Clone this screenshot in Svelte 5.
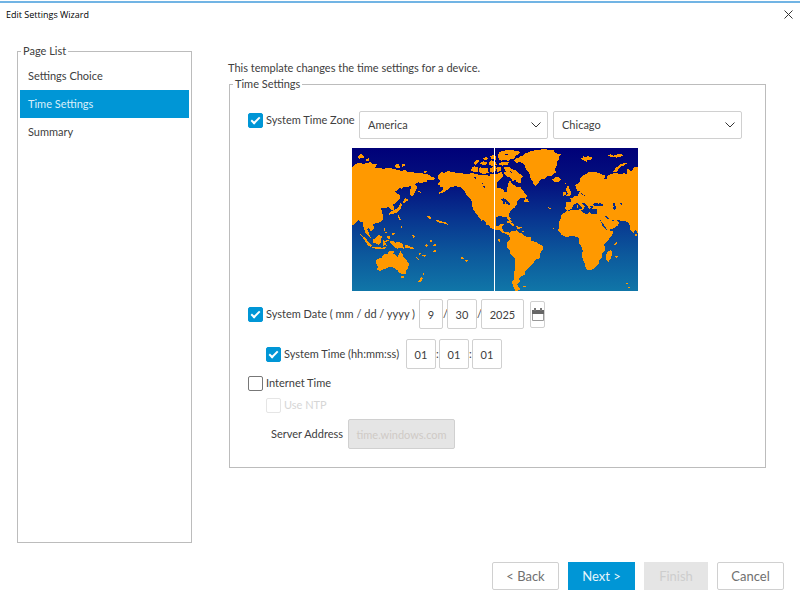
<script>
  const pages = ['Settings Choice', 'Time Settings', 'Summary'];
  const regions = ['America', 'Asia', 'Europe', 'Pacific'];
  const cities = ['Chicago', 'Denver', 'Los Angeles', 'New York'];

  let page = $state('Time Settings');

  // Time zone
  let useZone = $state(true);
  let region = $state('America');
  let city = $state('Chicago');

  // Date and time
  let useDate = $state(true);
  let useTime = $state(true);
  let date = $state({ month: '9', day: '30', year: '2025' });
  let time = $state({ hours: '01', minutes: '01', seconds: '01' });

  // Internet time
  let internetTime = $state(false);
  let useNtp = $state(false);
  let server = $state('time.windows.com');

  function step(dir) {
    const next = pages.indexOf(page) + dir;
    if (pages[next]) page = pages[next];
  }
</script>

<div class="wizard">
  <header>
    <h1>Edit Settings Wizard</h1>
    <button class="close" aria-label="Close">
      <svg width="9" height="9" viewBox="0 0 9 9"><path d="M.5.5l8 8M8.5.5l-8 8" /></svg>
    </button>
  </header>

  <div class="body">
    <fieldset class="pages">
      <legend>Page List</legend>
      {#each pages as p}
        <button class="page" class:active={page === p} onclick={() => (page = p)}>{p}</button>
      {/each}
    </fieldset>

    <main>
      <p class="intro">This template changes the time settings for a device.</p>

      <fieldset class="settings">
        <legend>Time Settings</legend>

        <div class="row zone">
          <label class="check zone-label"><input type="checkbox" bind:checked={useZone} />System Time Zone</label>
          <div class="select">
            <select aria-label="Region" bind:value={region}>
              {#each regions as r}<option>{r}</option>{/each}
            </select>
            <svg width="10" height="6" viewBox="0 0 10 6"><path d="M.5.5L5 5 9.5.5" /></svg>
          </div>
          <div class="select">
            <select aria-label="City" bind:value={city}>
              {#each cities as c}<option>{c}</option>{/each}
            </select>
            <svg width="10" height="6" viewBox="0 0 10 6"><path d="M.5.5L5 5 9.5.5" /></svg>
          </div>
        </div>

        <svg class="map" viewBox="0 0 858 429" role="img" aria-label="World map">
          <defs>
            <linearGradient id="sea" gradientUnits="userSpaceOnUse" x1="0" y1="0" x2="0" y2="429">
              <stop offset="0" stop-color="#000078" />
              <stop offset="0.25" stop-color="#04127f" />
              <stop offset="0.5" stop-color="#083690" />
              <stop offset="0.75" stop-color="#0c599c" />
              <stop offset="1" stop-color="#1076a8" />
            </linearGradient>
          </defs>
          <rect width="858" height="429" fill="url(#sea)" />

          <!-- north west: Asia, Alaska, western Canada -->
          <g class="land" transform="translate(-6 -9)">
            <path d="M6 68L15 58 30 52 38 56 50 55 62 50 66 56 80 58 75 68 95 68 98 73 115 68 135 73 155 78 165 75 172 80 185 80 195 84 210 85 225 86 240 90 243 95 252 97 257 102 245 106 232 105 230 111 222 112 212 115 205 112 195 118 200 124 200 130 195 143 187 155 180 150 180 135 185 122 175 125 160 125 155 131 150 128 142 137 135 140 141 145 150 150 150 160 140 172 130 178 132 195 125 197 118 190 118 184 110 188 92 190 97 200 98 215 98 226H6z" />
            <path d="M23 36L28 29 35 28 42 35 40 41 34 38 28 41zM48 43L56 40 58 47 49 49zM134 62L140 56 146 57 150 68 138 68zM155 58L165 57 163 64 156 65zM220 80L228 76 232 80 225 84z" />
            <path d="M158 172L166 159 178 165 168 168 163 176zM150 172L156 178 152 190 143 202 130 206 118 209 118 203 127 197 140 192 148 182zM142 205L146 210 153 225 147 225zM203 138L207 138 213 143 207 142zM232 214L240 214 245 220 238 222z" />
            <path d="M265 90L270 84 275 82 284 83 295 78 310 82 330 84 350 88 365 84 380 88 400 90 420 92 438 88 438 226H395L380 208 368 190 366 172 360 160 350 150 345 140 335 128 320 124 305 125 295 132 285 140 265 148 268 142 280 135 278 127 272 126 270 122 262 118 270 108 262 100z" />
            <path d="M363 78L366 66 375 64 384 68 384 80 372 80zM386 76L390 67 400 69 414 68 416 84 403 87 392 85zM370 53L380 45 390 44 384 52 376 60zM388 54L400 49 412 53 408 61 396 59zM398 41L410 36 414 43 403 45zM416 53L425 46 438 50 436 60 428 57 419 63zM420 70L438 64 438 76 426 84zM423 34L434 30 438 40 426 42z" />
            <path class="water" d="M372 97L380 95 377 101zM394 114L398 114 400 119 396 117zM400 124L404 124 404 128 400 127z" />
          </g>

          <!-- north east: eastern Canada, Greenland, Europe -->
          <g class="land" transform="translate(414 -9)">
            <path d="M14 88L20 88 35 80 40 92 28 105 20 115 22 128 38 132 45 142 52 140 50 128 55 122 52 113 64 112 68 118 80 125 92 125 96 135 100 138 105 146 112 150 108 158 95 158 85 165 80 170 80 180 72 190 66 192 62 198 55 210 62 220 60 226 55 226 48 215 40 216 30 212 18 218 14 226H0V88z" />
            <path d="M24 30L30 20 50 15 80 17 92 22 86 28 78 32 70 42 62 43 55 48 45 44 35 47 26 43zM0 35L10 29 20 35 18 44 6 43zM0 50L14 49 20 59 10 65 0 60zM28 54L38 50 56 52 53 59 38 62 26 60zM40 66L60 66 64 72 75 75 85 85 90 87 98 95 92 103 95 115 80 112 76 105 66 108 63 98 55 97 45 90 42 83 48 80zM18 68L32 65 34 75 23 82zM2 69L12 71 10 82 0 82zM105 159L111 162 115 165 116 171 102 170zM55 108L62 107 62 112 57 112z" />
            <path class="water" d="M32 162L42 160 50 166 57 174 61 176 60 180 50 178 46 170 44 178 40 178 39 168zM40 25L56 28 48 31zM60 76L66 83 60 82z" />
            <path d="M72 46L78 40 85 38 92 33 100 32 106 25 115 22 125 18 140 15 165 12 172 14 190 14 195 24 212 28 206 38 207 42 200 50 202 60 195 72 198 82 192 86 185 92 170 95 164 101 155 102 148 108 145 115 138 123 130 116 127 107 122 100 118 85 108 75 105 60 97 53 90 52 80 53z" />
            <path d="M185 100L188 103 195 97 208 97 214 104 205 110 192 110zM268 38L278 38 280 33 288 38 294 33 308 38 303 44 293 44 290 50 280 46zM352 30L362 28 370 32 378 30 390 25 400 31 392 36 384 35 380 38 360 35zM369 80L378 68 392 58 408 52 411 56 398 63 390 66 382 78 376 82z" />
            <path d="M258 130L256 120 268 112 272 98 285 88 300 80 318 82 330 86 345 92 345 100 335 102 350 102 352 92 360 88 375 84 395 88 402 82 408 88 412 88 410 70 418 72 420 80 430 74 430 68 444 66V226H210L214 212 220 205 232 198 226 190 228 172 244 170 240 158 248 158 255 152 265 154 266 142 272 140 275 150 285 152 292 140 290 125 300 108 312 102 308 112 305 122 322 120 335 122 318 128 316 134 300 142 290 152 280 150 268 136 262 138z" />
            <path d="M231 123L238 124 236 130 240 134 245 147 240 153 228 153 233 148 232 140 227 137zM219 142L227 140 229 148 219 153zM225 113L230 116 227 119zM174 186L184 190 183 194 177 192z" />
            <path class="water" d="M233 197L245 192 250 180 261 173 268 178 272 183 281 191 284 185 275 175 283 174 294 186 297 192 303 190 299 181 309 184 307 191 321 193 321 206 307 208 299 202 290 207 277 202 272 193 260 194 248 196zM309 180L315 172 325 176 333 173 334 178 344 179 335 184 316 184zM366 176L375 174 374 181 379 185 375 195 368 192 371 184zM390 176L396 173 395 179zM345 213L351 213 362 225 356 225z" />
            <path d="M260 181L264 180 265 190 260 190zM271 192L279 190 277 196z" />
          </g>

          <!-- south west: south east Asia, Oceania, Mexico -->
          <g class="land" transform="translate(-6 207)">
            <path d="M6 8H98L96 12 85 18 72 20 69 24 72 32 68 40 62 44 60 38 55 34 51 37 56 47 62 62 55 58 46 46 41 31 38 16 30 13 25 8 18 18 6 26z" />
            <path d="M31 52L38 58 45 61 55 75 66 86 62 91 52 83 42 68zM65 89L85 90 95 92 108 90 106 95 85 96 68 93zM68 68L78 63 86 53 96 59 93 66 94 76 86 84 76 79 69 78zM98 70L106 71 118 67 116 71 106 76 110 86 104 84 100 88zM100 32L105 34 104 42 111 47 106 47zM108 60L118 55 121 62 116 68zM119 71L130 71 135 78 142 74 158 80 162 95 148 92 142 96 132 88 122 80zM165 82L180 88 187 91 195 97 186 97 178 93 166 93z" />
            <path d="M79 130L84 126 95 122 98 116 105 110 112 111 118 102 132 101 130 110 143 119 148 111 150 98 155 109 158 112 161 122 170 129 177 142 174 155 169 160 167 170 160 171 148 168 143 160 138 158 135 154 125 150 115 151 107 156 95 158 90 162 82 158 83 148 79 140z" />
            <path d="M153 176L165 179 159 185 154 182zM218 167L223 171 218 176zM215 180L219 184 212 196 203 194z" />
            <path d="M127 48L134 48 132 56 126 54zM153 27L158 30 155 34zM186 52L194 57 193 63 188 60zM238 66L246 71 243 77zM252 80L258 83 255 89 249 86zM227 81L234 84 231 90 226 87zM251 99L260 101 258 106 250 104zM217 113L228 115 224 119 216 117zM206 107L213 110 208 113zM199 121L209 127 204 129zM333 120L342 122 340 127 334 125zM344 128L352 128 356 133 348 134zM233 1L242 2 239 6zM256 9L264 9 270 13 280 14 288 17 296 24 284 20 270 18 260 14z" />
            <path d="M390 5L393 8 396 13 402 19 412 25 408 18 400 7 398 4H438V36L425 32 412 23 404 21 395 13z" />
          </g>

          <!-- south east: the Americas, Africa, India -->
          <g class="land" transform="translate(414 207)">
            <path d="M0 5H14L12 15 18 27 28 26 34 20 42 21 36 30 39 43 46 45 54 44 60 48 55 54 43 49 34 46 28 39 12 38 0 32z" />
            <path d="M50 1L55 1 63 12 68 12 62 16zM48 15L56 12 70 20 76 25 68 26 59 19zM78 28L90 29 98 33 83 36zM95 40L102 44 98 46zM24 67L30 66 29 75 25 73zM189 32L193 32 193 36 189 36z" />
            <path d="M57 50L62 44 68 42 80 40 86 46 95 48 105 58 122 60 122 72 135 74 150 82 160 87 158 98 152 105 150 120 146 126 138 127 133 134 128 142 120 149 115 155 105 165 106 173 95 178 88 184 89 195 82 202 85 210 92 216 84 221H76L70 210 66 195 72 186 72 175 75 150 76 125 62 112 60 102 51 91 51 78 60 67z" />
            <path d="M96 207L108 206 110 210 100 211z" />
            <path d="M212 5H323L333 15 338 28 349 39 371 42 366 54 356 67 343 82 345 100 335 112 335 122 328 130 325 143 310 157 294 160 287 153 285 142 277 123 275 113 279 102 275 90 266 77 268 62 258 61 253 56 240 57 231 61 215 54 205 40 208 24 205 18z" />
            <path d="M327 5H363L368 12 378 8 388 17 382 27 370 34 353 40 341 22z" />
            <path d="M373 5H444V50L438 41 439 34 430 48 422 40 417 19 408 13 395 12z" />
            <path d="M348 112L353 104 362 99 367 106 363 123 356 134 348 128zM372 82L380 76 380 82 374 86zM376 118L384 116 385 121 378 122zM347 93L352 96 348 98zM434 50L440 52 440 58 434 58zM407 198L413 199 411 204zM413 209L419 211 417 216z" />
          </g>
          <path class="meridian" d="M427.5 0V429" />
        </svg>

        <div class="row">
          <label class="check date-label"><input type="checkbox" bind:checked={useDate} />System Date ( mm / dd / yyyy )</label>
          <input class="box month" type="text" aria-label="Month" bind:value={date.month} />
          <span class="slash">/</span>
          <input class="box" type="text" aria-label="Day" bind:value={date.day} />
          <span class="slash">/</span>
          <input class="box year" type="text" aria-label="Year" bind:value={date.year} />
          <button class="calendar" aria-label="Pick a date">
            <svg width="12" height="13" viewBox="0 0 12 13">
              <path d="M.5 3.5h11v9H.5z" fill="#fff" stroke="#999" />
              <path d="M0 2h12v4H0z" fill="#666" />
              <path d="M2 0h2v3H2zM8 0h2v3H8z" fill="#777" />
            </svg>
          </button>
        </div>

        <div class="row indent time">
          <label class="check time-label"><input type="checkbox" bind:checked={useTime} />System Time (hh:mm:ss)</label>
          <input class="box" type="text" aria-label="Hours" bind:value={time.hours} />
          <span class="colon">:</span>
          <input class="box" type="text" aria-label="Minutes" bind:value={time.minutes} />
          <span class="colon">:</span>
          <input class="box" type="text" aria-label="Seconds" bind:value={time.seconds} />
        </div>

        <div class="row internet">
          <label class="check"><input type="checkbox" bind:checked={internetTime} />Internet Time</label>
        </div>
        <div class="row indent ntp">
          <label class="check" class:off={!internetTime}>
            <input type="checkbox" disabled={!internetTime} bind:checked={useNtp} />Use NTP
          </label>
        </div>
        <div class="row server">
          <label for="server">Server Address</label>
          <input class="box address" type="text" id="server" disabled={!internetTime} bind:value={server} />
        </div>
      </fieldset>
    </main>
  </div>

  <footer>
    <button class="btn" onclick={() => step(-1)}>&lt; Back</button>
    <button class="btn primary" onclick={() => step(1)}>Next &gt;</button>
    <button class="btn finish" disabled>Finish</button>
    <button class="btn">Cancel</button>
  </footer>
</div>

<style>
  *, *::before, *::after { box-sizing: border-box; margin: 0; padding: 0; }

  :global(body) {
    margin: 0;
    background: #fff;
  }

  .wizard {
    min-height: 100vh;
    padding-top: 1px;
    display: flex;
    flex-direction: column;
    font-family: 'Lato', 'Noto Sans', sans-serif;
    font-size: 11px;
    line-height: 16px;
    color: #404040;
  }

  button, input, select {
    font: inherit;
    color: inherit;
  }

  header {
    display: flex;
    align-items: center;
    justify-content: space-between;
    height: 25px;
    padding: 0 7px 0 6px;
    border-top: 2px solid #71b4e4;
  }

  h1 {
    font-family: 'Open Sans', sans-serif;
    font-size: 9px;
    font-weight: 400;
    color: #000;
  }

  .close {
    display: flex;
    background: none;
    border: none;
  }

  .close svg, .select svg {
    fill: none;
    stroke: #333;
  }

  .body {
    flex: 1;
    display: flex;
    gap: 36px;
    padding: 17px 34px 0 17px;
  }

  fieldset {
    min-width: 0;
    border: 1px solid #bcbcbc;
  }

  legend {
    margin-left: 1px;
    padding: 0 2px;
  }

  .pages {
    flex: 0 0 175px;
    padding: 3px 2px;
  }

  .page {
    display: block;
    width: 100%;
    height: 28px;
    padding: 0 8px;
    text-align: left;
    background: none;
    border: none;
  }

  .page.active {
    background: #0096d6;
    color: #d9effa;
  }

  main {
    flex: 1;
    min-width: 0;
    padding-top: 17px;
  }

  .settings {
    margin-left: 1px;
    padding: 19px 23px 18px 18px;
  }

  .settings legend { margin-left: -15px; }

  .row {
    display: flex;
    align-items: center;
  }

  .indent { padding-left: 18px; }

  .check {
    display: flex;
    align-items: center;
    gap: 3px;
    white-space: nowrap;
  }

  .check input {
    flex: none;
    display: grid;
    place-items: center;
    width: 15px;
    height: 15px;
    appearance: none;
    background: #fff;
    border: 1px solid #777;
    border-radius: 2px;
  }

  .check input:checked {
    background: #0096d6;
    border-color: #0096d6;
  }

  .check input:checked::before {
    content: '';
    width: 9px;
    height: 5px;
    border: solid #fff;
    border-width: 0 0 2px 2px;
    transform: translateY(-1px) rotate(-45deg);
  }

  .check input:disabled { border-color: #e5e5e5; }

  .off { color: #d6d6d6; }

  .zone {
    align-items: flex-start;
    gap: 5px;
  }

  .zone-label {
    width: 106px;
    padding-top: 1px;
  }

  .date-label { width: 171px; }

  .time-label { width: 140px; }

  .select {
    flex: 1;
    min-width: 0;
    display: grid;
    align-items: center;
  }

  .select > * { grid-area: 1 / 1; }

  .select select {
    width: 100%;
    height: 28px;
    padding: 0 8px;
    appearance: none;
    background: #fff;
    border: 1px solid #d0d0d0;
    border-radius: 2px;
  }

  .select svg {
    justify-self: end;
    margin-right: 7px;
    pointer-events: none;
  }

  .map {
    display: block;
    width: 286px;
    height: 143px;
    margin: 9px auto 8px;
  }

  .land {
    fill: #ff9900;
    shape-rendering: crispEdges;
  }

  .water { fill: url(#sea); }

  .meridian {
    stroke: #fff;
    stroke-width: 3px;
    shape-rendering: crispEdges;
  }

  .box {
    width: 30px;
    height: 30px;
    text-align: center;
    background: #fff;
    border: 1px solid #d0d0d0;
    border-radius: 2px;
  }

  .box.month { width: 24px; }

  .box.year { width: 43px; }

  .slash, .colon {
    width: 4px;
    text-align: center;
  }

  .colon { width: 3px; }

  .calendar {
    width: 15px;
    height: 27px;
    margin-left: 6px;
    display: flex;
    align-items: center;
    justify-content: center;
    background: #fff;
    border: 1px solid #d0d0d0;
    border-radius: 2px;
  }

  .time { padding-top: 10px; }

  .internet { padding-top: 6px; }

  .ntp { padding-top: 6px; }

  .server {
    gap: 5px;
    padding: 6px 0 0 23px;
  }

  .box.address { width: 107px; }

  .box:disabled {
    background: #e5e5e5;
    color: #cfcac5;
  }

  footer {
    display: flex;
    justify-content: flex-end;
    align-items: center;
    gap: 9px;
    padding: 19px 16px 15px;
  }

  .btn {
    width: 67px;
    height: 28px;
    font-size: 13px;
    background: #fff;
    border: 1px solid #d0d0d0;
    border-radius: 2px;
    color: #707070;
  }

  .btn.primary {
    background: #0096d6;
    border-color: #0096d6;
    border-radius: 0;
    color: #e6f5fb;
  }

  .btn.finish {
    width: 64px;
    background: #e5e5e5;
    border-color: #e5e5e5;
    border-radius: 0;
    color: #cdcdcd;
  }
</style>
